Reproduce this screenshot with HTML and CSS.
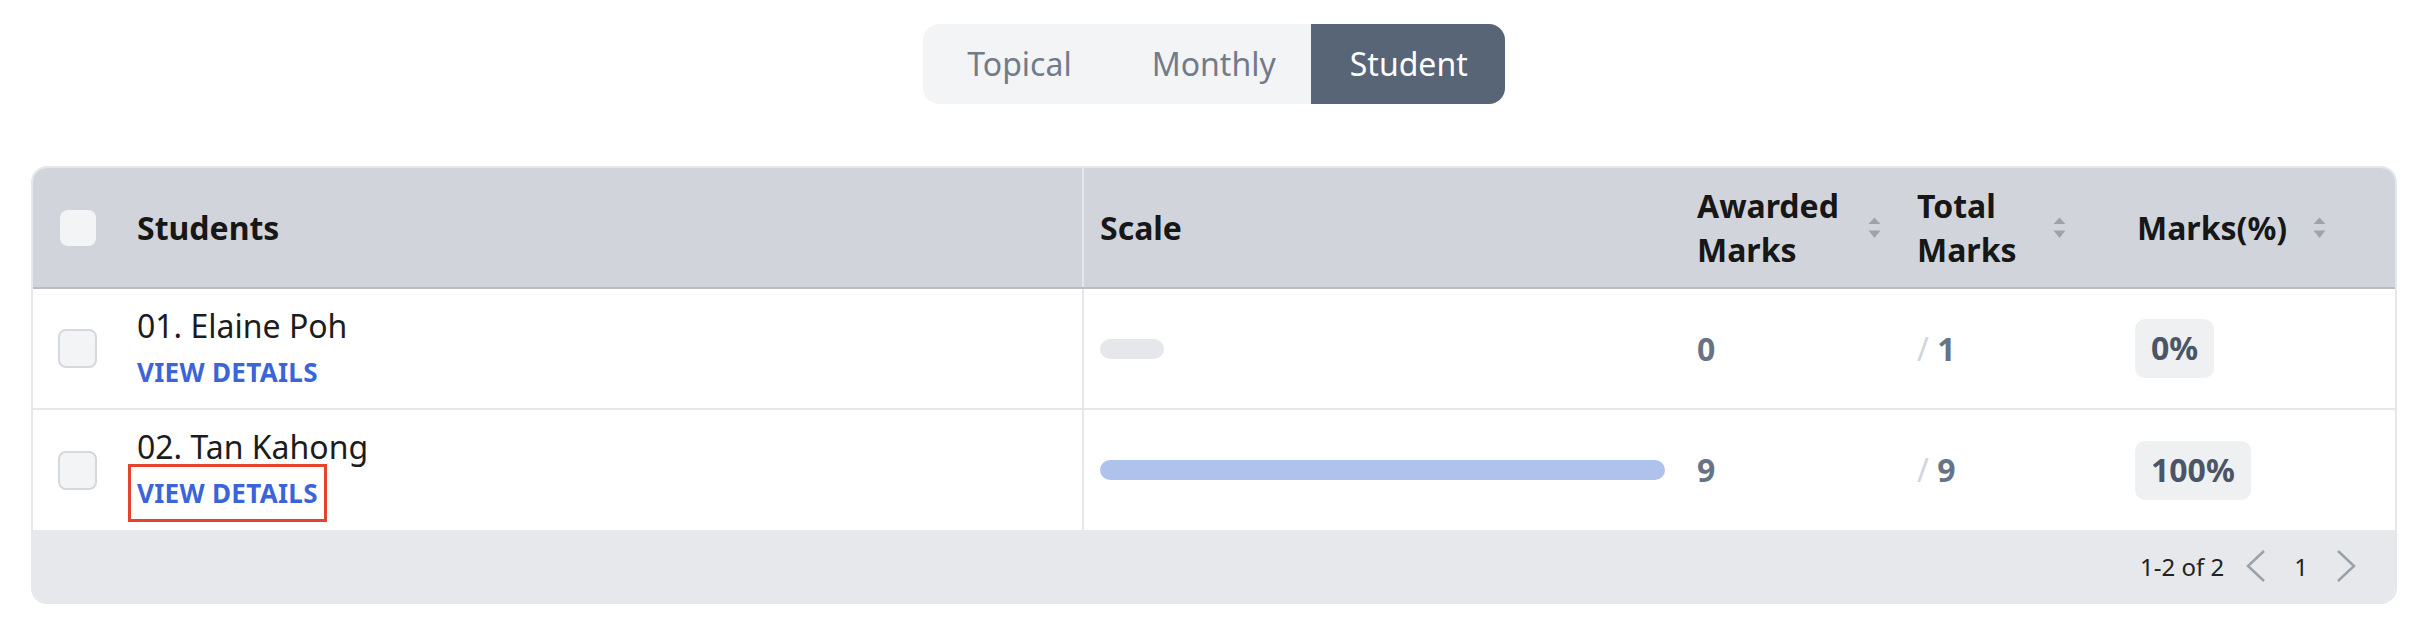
FILE: index.html
```html
<!DOCTYPE html>
<html lang="en">
<head>
<meta charset="utf-8">
<title>Student marks</title>
<link rel="stylesheet" href="styles.css">
</head>
<body>
<div class="page">
  <div class="toggle">
    <button class="seg seg-first">Topical</button>
    <button class="seg seg-mid">Monthly</button>
    <button class="seg seg-last active">Student</button>
  </div>

  <div class="table">
    <div class="row head">
      <div class="cell c-student"><span class="cb cb-head"></span><span class="th">Students</span></div>
      <div class="cell c-scale"><span class="th">Scale</span></div>
      <div class="cell c-award"><span class="th">Awarded<br>Marks</span><svg class="sort" viewBox="0 0 13 22" width="13" height="22"><path d="M6.5 0.5 L12.5 7 H0.5 Z"/><path d="M0.5 13.5 H12.5 L6.5 21 Z"/></svg></div>
      <div class="cell c-total"><span class="th">Total<br>Marks</span><svg class="sort" viewBox="0 0 13 22" width="13" height="22"><path d="M6.5 0.5 L12.5 7 H0.5 Z"/><path d="M0.5 13.5 H12.5 L6.5 21 Z"/></svg></div>
      <div class="cell c-pct"><span class="th">Marks(%)</span><svg class="sort" viewBox="0 0 13 22" width="13" height="22"><path d="M6.5 0.5 L12.5 7 H0.5 Z"/><path d="M0.5 13.5 H12.5 L6.5 21 Z"/></svg></div>
      <div class="cell c-end"></div>
    </div>

    <div class="row body">
      <div class="cell c-student">
        <span class="cb"></span>
        <div class="who">
          <div class="name">01. Elaine Poh</div>
          <a class="link" href="#">VIEW DETAILS</a>
        </div>
      </div>
      <div class="cell c-scale"><div class="bar empty" style="width:0%"></div></div>
      <div class="cell c-award"><span class="num">0</span></div>
      <div class="cell c-total"><span class="total"><span class="slash">/</span> <span class="num">1</span></span></div>
      <div class="cell c-pct"><span class="badge">0%</span></div>
      <div class="cell c-end"></div>
    </div>

    <div class="row body last">
      <div class="cell c-student">
        <span class="cb"></span>
        <div class="who">
          <div class="name">02. Tan Kahong</div>
          <a class="link marked" href="#">VIEW DETAILS</a>
        </div>
      </div>
      <div class="cell c-scale"><div class="bar full" style="width:100%"></div></div>
      <div class="cell c-award"><span class="num">9</span></div>
      <div class="cell c-total"><span class="total"><span class="slash">/</span> <span class="num">9</span></span></div>
      <div class="cell c-pct"><span class="badge">100%</span></div>
      <div class="cell c-end"></div>
    </div>

    <div class="footer">
      <span class="range">1-2 of 2</span>
      <svg class="chev" viewBox="0 0 22 32" width="22" height="32"><polyline points="19,1 3,16 19,31"/></svg>
      <span class="pageno">1</span>
      <svg class="chev" viewBox="0 0 22 32" width="22" height="32"><polyline points="3,1 19,16 3,31"/></svg>
    </div>
  </div>
</div>
</body>
</html>
```

FILE: styles.css
```css
* { box-sizing: border-box; }

html, body {
  margin: 0;
  padding: 0;
  background: #ffffff;
}

body {
  font-family: "Noto Sans", "Open Sans", sans-serif;
  color: #1c1c1c;
}

.page {
  padding: 24px 31px 0;
  display: flex;
  flex-direction: column;
  align-items: center;
}

/* segmented toggle */
.toggle {
  display: flex;
  height: 80px;
  background: #f3f4f6;
  border-radius: 16px;
  overflow: hidden;
}

.seg {
  border: 0;
  margin: 0;
  background: transparent;
  font-family: inherit;
  font-size: 32px;
  line-height: 80px;
  padding: 0 39px;
  color: #727b8a;
  cursor: pointer;
}

.seg-first { padding: 0 40px 0 44px; }
.seg-mid { padding: 0 35px 0 40px; }
.seg-last { padding: 0 37px 0 39px; }

.seg.active {
  background: #586577;
  color: #ffffff;
}

/* table */
.table {
  margin-top: 62px;
  width: 100%;
  border: 2px solid #e5e7eb;
  border-radius: 16px;
  overflow: hidden;
}

.row {
  display: grid;
  grid-template-columns: 1049px 599px 216px 222px 223px 1fr;
}

.row.head {
  height: 121px;
  background: #d1d5db;
  border-bottom: 2px solid #b9bdc3;
}

.row.body {
  height: 121px;
  border-bottom: 2px solid #e5e7eb;
}

.row.body.last {
  height: 120px;
  border-bottom: 0;
}

.cell {
  display: flex;
  align-items: center;
  min-width: 0;
}

.c-student { padding-left: 25px; }
.c-scale { padding: 0 16px; border-left: 2px solid #e5e7eb; }
.c-award { padding: 0 16px; justify-content: space-between; }
.c-total { padding: 0 53px 0 20px; }
.head .c-total { justify-content: space-between; }
.c-pct { padding: 0 16px; }
.head .c-pct { justify-content: space-between; padding-left: 18px; }

.th {
  font-size: 32px;
  font-weight: 700;
  line-height: 44px;
  color: #171717;
}

.sort { fill: #9da3ad; flex: none; }

/* checkboxes */
.cb {
  flex: none;
  width: 39px;
  height: 39px;
  border: 2px solid #d5d8dd;
  border-radius: 8px;
  background: #f3f4f6;
  margin-right: 40px;
}

.cb.cb-head {
  width: 36px;
  height: 36px;
  border: 0;
  margin-left: 2px;
  margin-right: 41px;
}

/* students */
.who {
  display: flex;
  flex-direction: column;
  align-items: flex-start;
  margin-top: -2px;
}

.name {
  font-size: 32px;
  line-height: 44px;
  color: #1c1c1c;
}

.link {
  margin-top: 4px;
  font-size: 26px;
  line-height: 40px;
  font-weight: 700;
  letter-spacing: 0.3px;
  color: #3a64d8;
  text-decoration: none;
}

.link.marked {
  outline: 3px solid #e5432d;
  outline-offset: 6px;
}

/* scale bar */
.bar {
  height: 20px;
  border-radius: 10px;
}

.bar.empty {
  min-width: 64px;
  background: #e5e7eb;
}

.bar.full {
  background: #aec2eb;
}

/* numbers */
.num {
  font-size: 32px;
  line-height: 44px;
  font-weight: 700;
  color: #677386;
}

.total {
  font-size: 32px;
  line-height: 44px;
  white-space: pre;
}

.slash {
  color: #d1d5db;
}

.badge {
  display: inline-block;
  padding: 7px 16px 8px;
  border-radius: 10px;
  background: #eef0f2;
  font-size: 32px;
  line-height: 44px;
  font-weight: 700;
  color: #4b5565;
}

/* footer */
.footer {
  height: 72px;
  background: #e6e8eb;
  display: flex;
  align-items: center;
  justify-content: flex-end;
  padding-right: 38px;
  font-size: 24px;
  color: #222222;
}

.range { margin-right: 21px; }
.pageno { margin: 0 27px; }

.chev {
  fill: none;
  stroke: #9aa1ab;
  stroke-width: 2.5;
  flex: none;
}
```
